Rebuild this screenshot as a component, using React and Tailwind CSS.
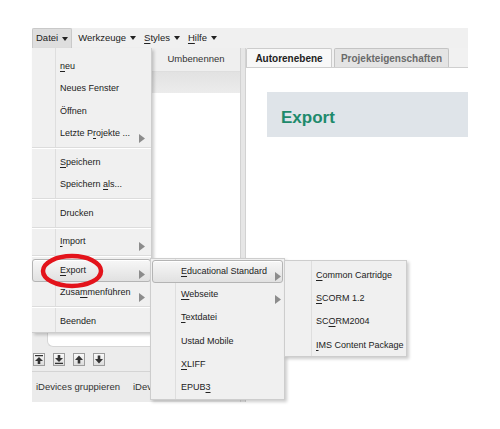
import React from 'react';

const Arrow = () => (
  <svg width="6" height="9" viewBox="0 0 6 9" className="absolute">
    <polygon points="0,0 6,4.5 0,9" fill="#8c8c8c" />
  </svg>
);

const Caret = () => (
  <svg width="6" height="4" viewBox="0 0 6 4" className="ml-[4px] shrink-0">
    <polygon points="0,0 6,0 3,4" fill="#222" />
  </svg>
);

const U = ({ children }) => <span className="underline underline-offset-2">{children}</span>;

// one entry of a dropdown menu
const Item = ({ children, arrow, active, pl, h, arrowX }) => (
  <div
    className={`relative flex items-center ${h} ${pl} ${
      active ? 'bg-gradient-to-b from-[#f7f7f7] to-[#e1e1e1] border border-[#b4b4b4] rounded-[3px] shadow-[inset_0_1px_0_#fff]' : 'border border-transparent'
    }`}
  >
    <span className="text-[#222] whitespace-nowrap">{children}</span>
    {arrow && (
      <span className={`absolute top-1/2 -translate-y-1/2 ${arrowX}`}>
        <Arrow />
      </span>
    )}
  </div>
);

const Sep = () => (
  <div className="h-[6px] flex flex-col justify-center">
    <div className="h-[1px] bg-[#dcdcdc]" />
    <div className="h-[1px] bg-white" />
  </div>
);

const ToolBtn = ({ d }) => (
  <div className="w-[12px] h-[13px] border border-[#9c9c9c] bg-gradient-to-b from-[#fafafa] to-[#dcdcdc] flex items-center justify-center">
    <svg width="8" height="9" viewBox="0 0 8 9">
      <path d={d} fill="#333" />
    </svg>
  </div>
);

export default function App() {
  const dateiItem = 'h-[22.5px]';
  return (
    <div className="relative w-[500px] h-[429px] overflow-hidden bg-white text-[9px] font-['Liberation_Sans',Arial,sans-serif]">
      {/* application window */}
      <div className="pt-[28px] pl-[32px]">
        <div className="w-[436px] h-[374px] flex flex-col">
          {/* menu bar */}
          <div className="h-[20px] bg-[#f0f0f0] flex items-stretch text-[#222] text-[9.5px]">
            <div className="flex items-center pl-[3px] pr-[3px] bg-[#dedede] border-x border-t border-[#c9c9c9] rounded-t-[2px]">
              Datei<Caret />
            </div>
            <div className="flex items-center ml-[6px]">Werkzeuge<Caret /></div>
            <div className="flex items-center ml-[8px]"><U>S</U>tyles<Caret /></div>
            <div className="flex items-center ml-[8px]"><U>H</U>ilfe<Caret /></div>
          </div>

          <div className="flex flex-1">
            {/* left panel */}
            <div className="w-[208px] flex flex-col bg-[#ececec]">
              <div className="h-[24px] flex justify-end bg-[#efefef] border-b border-[#dedede]">
                <div className="w-[88px] flex items-center justify-center text-[#333] text-[9.5px]">Umbenennen</div>
              </div>
              <div className="h-[21px] bg-gradient-to-b from-[#e2e2e2] to-[#ececec]" />
              <div className="flex-1 flex">
                <div className="w-[15px] bg-[#ececec]" />
                <div className="flex-1 bg-white rounded-bl-[6px] border-b border-l border-[#d6d6d6]" />
              </div>
              <div className="h-[25px] flex items-center gap-[8px] pl-[1px] border-b border-[#d4d4d4]">
                <ToolBtn d="M0,0 H8 V1.2 H0 Z M4,2 L8,6 H5.3 V9 H2.7 V6 H0 Z" />
                <ToolBtn d="M2.7,0 H5.3 V3 H8 L4,7 L0,3 H2.7 Z M0,7.8 H8 V9 H0 Z" />
                <ToolBtn d="M4,0.5 L8,5 H5.3 V8.5 H2.7 V5 H0 Z" />
                <ToolBtn d="M2.7,0.5 H5.3 V4 H8 L4,8.5 L0,4 H2.7 Z" />
              </div>
              <div className="h-[30px] flex items-center gap-[13px] pl-[4px] bg-[#ebebeb] text-[#333] text-[9.5px] whitespace-nowrap overflow-hidden">
                <span>iDevices gruppieren</span>
                <span className="w-[22px] overflow-hidden">iDevices</span>
              </div>
            </div>

            {/* splitter */}
            <div className="w-[6px] bg-[#e6e6e6] border-x border-[#d2d2d2]" />

            {/* right panel */}
            <div className="flex-1 flex flex-col">
              <div className="h-[20px] bg-[#f1f1f1] flex items-end gap-[2px] border-b border-[#cfcfcf] font-bold text-[10px]">
                <div className="h-[19px] w-[86px] flex items-center justify-center bg-[#f8f8f8] border border-b-0 border-[#cccccc] rounded-t-[2px] text-[#222]">
                  Autorenebene
                </div>
                <div className="h-[19px] w-[115px] flex items-center justify-center bg-[#e4e4e4] border border-b-0 border-[#c4c4c4] rounded-t-[2px] text-[#6a6a6a]">
                  Projekteigenschaften
                </div>
              </div>
              <div className="flex-1 bg-white pt-[24px] pl-[21px]">
                <div className="h-[45px] bg-[#dfe4e9] flex items-center pl-[14px] pt-[6px]">
                  <span className="text-[17px] font-bold text-[#1e8a6c]">Export</span>
                </div>
              </div>
            </div>
          </div>
        </div>
      </div>

      {/* Datei menu */}
      <div className="absolute left-[32px] top-[48px] w-[120px] h-[285px] bg-[#f0f0f0] border-r border-b border-[#cdcdcd] shadow-[2px_2px_3px_rgba(0,0,0,0.2)] pt-[7px]">
        <div className="absolute left-[23px] top-0 bottom-0 w-[1px] bg-[#dedede]" />
        <div className="relative flex flex-col">
          <Item h={dateiItem} pl="pl-[27px]"><U>n</U>eu</Item>
          <Item h={dateiItem} pl="pl-[27px]">Neues Fenster</Item>
          <Item h={dateiItem} pl="pl-[27px]">Öffnen</Item>
          <Item h={dateiItem} pl="pl-[27px]" arrow arrowX="left-[106px]">Letzte P<U>r</U>ojekte ...</Item>
          <Sep />
          <Item h={dateiItem} pl="pl-[27px]"><U>S</U>peichern</Item>
          <Item h={dateiItem} pl="pl-[27px]">Speichern <U>a</U>ls...</Item>
          <Sep />
          <Item h={dateiItem} pl="pl-[27px]">Drucken</Item>
          <Sep />
          <Item h={dateiItem} pl="pl-[27px]" arrow arrowX="left-[106px]"><U>I</U>mport</Item>
          <Sep />
          <Item h={dateiItem} pl="pl-[27px]" active arrow arrowX="left-[106px]"><U>E</U>xport</Item>
          <Item h={dateiItem} pl="pl-[27px]" arrow arrowX="left-[106px]">Zusa<U>m</U>menführen</Item>
          <Sep />
          <Item h={dateiItem} pl="pl-[27px]">Beenden</Item>
        </div>
      </div>

      {/* Export submenu */}
      <div className="absolute left-[150px] top-[258px] w-[135px] h-[142px] bg-[#f0f0f0] border border-[#cdcdcd] shadow-[2px_2px_3px_rgba(0,0,0,0.2)] pt-[1px] px-[1px]">
        <div className="absolute left-[24px] top-0 bottom-0 w-[1px] bg-[#dedede]" />
        <div className="relative flex flex-col">
          <Item h="h-[23.3px]" pl="pl-[28px]" active arrow arrowX="left-[122px]"><U>E</U>ducational Standard</Item>
          <Item h="h-[23.3px]" pl="pl-[28px]" arrow arrowX="left-[122px]"><U>W</U>ebseite</Item>
          <Item h="h-[23.3px]" pl="pl-[28px]"><U>T</U>extdatei</Item>
          <Item h="h-[23.3px]" pl="pl-[28px]">Ustad Mobile</Item>
          <Item h="h-[23.3px]" pl="pl-[28px]"><U>X</U>LIFF</Item>
          <Item h="h-[23.3px]" pl="pl-[28px]">EPUB<U>3</U></Item>
        </div>
      </div>

      {/* Educational Standard submenu */}
      <div className="absolute left-[284px] top-[260px] w-[123px] h-[97px] bg-[#f0f0f0] border border-[#cdcdcd] shadow-[2px_2px_3px_rgba(0,0,0,0.2)] pt-[3px]">
        <div className="absolute left-[26px] top-0 bottom-0 w-[1px] bg-[#dedede]" />
        <div className="relative flex flex-col">
          <Item h="h-[23.3px]" pl="pl-[30px]"><U>C</U>ommon Cartridge</Item>
          <Item h="h-[23.3px]" pl="pl-[30px]"><U>S</U>CORM 1.2</Item>
          <Item h="h-[23.3px]" pl="pl-[30px]">SC<U>O</U>RM2004</Item>
          <Item h="h-[23.3px]" pl="pl-[30px]"><U>I</U>MS Content Package</Item>
        </div>
      </div>

      {/* red marker around Export */}
      <svg className="absolute left-[40px] top-[253px]" width="64" height="36" viewBox="0 0 64 36">
        <ellipse cx="32" cy="18" rx="29" ry="15" fill="none" stroke="#e3131b" strokeWidth="4.5" />
      </svg>
    </div>
  );
}
